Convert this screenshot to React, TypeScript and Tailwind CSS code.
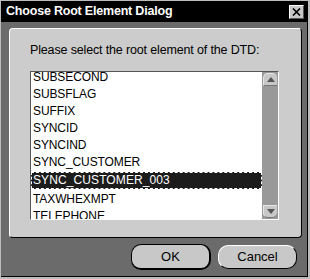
import React from "react";

const items = [
  "SUBSECOND",
  "SUBSFLAG",
  "SUFFIX",
  "SYNCID",
  "SYNCIND",
  "SYNC_CUSTOMER",
  "SYNC_CUSTOMER_003",
  "TAXWHEXMPT",
  "TELEPHONE",
];

export default function App() {
  return (
    <div
      className="w-[310px] h-[279px] bg-[#bcbcbc] pl-[1px] pt-[1px] pr-[2px] pb-[2px] overflow-hidden"
      style={{ fontFamily: '"Liberation Sans", Arial, sans-serif' }}
    >
      <div className="w-full h-full flex flex-col bg-[#6b6b6b] border-r border-b border-black">
        {/* Title bar */}
        <div className="h-[21px] bg-black flex items-center justify-between pl-[5px] pr-[3px]">
          <span className="text-white font-bold text-[12.5px] tracking-[-0.2px] leading-none">
            Choose Root Element Dialog
          </span>
          <div className="w-[15px] h-[14px] bg-[#c8c8c8] border-t border-l border-white border-r border-b border-r-[#555] border-b-[#555] flex items-center justify-center">
            <svg width="9" height="8" viewBox="0 0 9 8">
              <path d="M1 0.5 L8 7.5 M8 0.5 L1 7.5" stroke="black" strokeWidth="1.6" />
            </svg>
          </div>
        </div>

        {/* Body */}
        <div className="flex-1 flex flex-col pl-[8px] pt-[6px]">
          {/* Panel */}
          <div className="w-[293px] h-[210px] bg-[#cccccc] rounded-[4px] border-t border-l border-white border-r border-b border-r-black border-b-black pl-[20px] pt-[13px]">
            <div className="text-[12.5px] leading-[17px] text-black tracking-[-0.15px]">
              Please select the root element of the DTD:
            </div>
            {/* List box */}
            <div className="mt-[12px] w-[249px] h-[149px] flex border-t border-l border-[#555] border-r border-b border-r-white border-b-white">
              <div className="w-[231px] h-full bg-white overflow-hidden">
                <div className="-mt-[3px]">
                  {items.map((it) => {
                    const sel = it === "SYNC_CUSTOMER_003";
                    return sel ? (
                      <div
                        key={it}
                        className="h-[17px] mt-[1px] mb-[2px] bg-[#1c1c1c] text-white border border-dashed border-white pl-[1px] text-[12px] leading-[15px] tracking-[0.1px] whitespace-nowrap"
                      >
                        {it}
                      </div>
                    ) : (
                      <div
                        key={it}
                        className="h-[17px] pl-[2px] text-[12px] leading-[17px] text-black tracking-[-0.1px] whitespace-nowrap"
                      >
                        {it}
                      </div>
                    );
                  })}
                </div>
              </div>
              {/* Scrollbar */}
              <div className="w-[16px] h-full bg-[#999999] flex flex-col justify-between items-center py-[1px]">
                <div className="w-[14px] h-[13px] bg-[#c8c8c8] rounded-t-[5px] border-t border-l border-[#e6e6e6] border-b border-b-[#777] flex items-center justify-center">
                  <svg width="8" height="5" viewBox="0 0 8 5">
                    <path d="M4 0 L8 5 L0 5 Z" fill="#555" />
                  </svg>
                </div>
                <div className="w-[14px] h-[13px] bg-[#c8c8c8] rounded-b-[5px] border-t border-t-[#e6e6e6] border-l border-l-[#e6e6e6] border-b border-b-[#777] flex items-center justify-center">
                  <svg width="8" height="5" viewBox="0 0 8 5">
                    <path d="M0 0 L8 0 L4 5 Z" fill="#555" />
                  </svg>
                </div>
              </div>
            </div>
          </div>

          {/* Buttons */}
          <div className="flex justify-end items-center gap-[7px] pr-[10px] mt-[6px]">
            <div className="w-[80px] h-[26px] rounded-[10px] border border-black border-r-2 border-b-2 bg-[#c8c8c8] flex items-center justify-center text-[13px] text-black">
              OK
            </div>
            <div className="w-[79px] h-[24px] rounded-[10px] border border-t-white border-l-white border-r-black border-b-black bg-[#c8c8c8] flex items-center justify-center text-[13px] text-black">
              Cancel
            </div>
          </div>
        </div>
      </div>
    </div>
  );
}
